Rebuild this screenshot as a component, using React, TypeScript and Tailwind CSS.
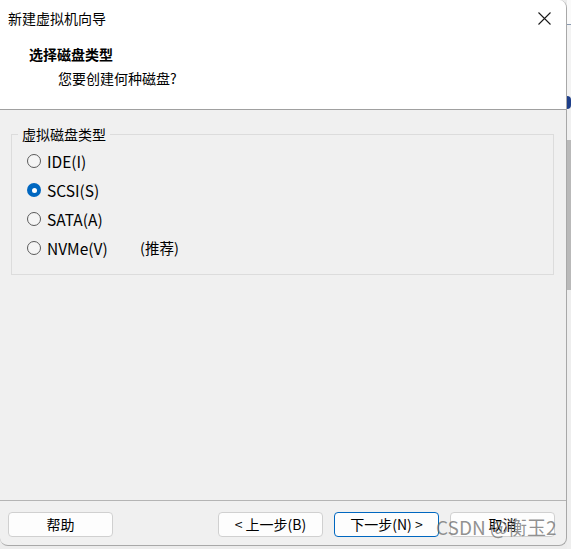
import React from 'react';

const options = [
  { label: 'IDE(I)', checked: false },
  { label: 'SCSI(S)', checked: true },
  { label: 'SATA(A)', checked: false },
  { label: 'NVMe(V)', checked: false, note: '(推荐)' },
];

const font = "font-['Noto_Sans_CJK_SC','Noto_Sans',sans-serif]";

const Radio: React.FC<{ checked: boolean }> = ({ checked }) =>
  checked ? (
    <span className="w-[14px] h-[14px] rounded-full bg-[#0067c0] flex items-center justify-center">
      <span className="w-[5px] h-[5px] rounded-full bg-white" />
    </span>
  ) : (
    <span className="w-[14px] h-[14px] rounded-full border border-[#5a5a5a] bg-[#f5f5f5]" />
  );

const Button: React.FC<{ children: React.ReactNode; primary?: boolean }> = ({ children, primary }) => (
  <button
    className={
      primary
        ? 'w-[105px] h-[25px] rounded-[4px] border border-[#0067c0] bg-[#fdfdfd] text-[14px] text-black flex items-center justify-center'
        : 'w-[105px] h-[25px] rounded-[4px] border border-[#d0d0d0] bg-[#fdfdfd] text-[14px] text-black flex items-center justify-center'
    }
  >
    {children}
  </button>
);

export default function App() {
  return (
    <div className={`w-[571px] h-[549px] flex bg-[#ececec] overflow-hidden ${font}`}>
      <div className="w-[567px] h-[546px] shrink-0 flex flex-col bg-[#f0f0f0] border-r border-b border-[#a8a8a8] rounded-tr-[8px] rounded-b-[8px] overflow-hidden relative">
        {/* header */}
        <div className="h-[110px] bg-white border-b border-[#a0a0a0] flex flex-col">
          <div className="h-[36px] flex items-center justify-between pl-[8px] pr-[14px]">
            <span className="text-[14px] leading-[20px] text-black">新建虚拟机向导</span>
            <svg width="13" height="13" viewBox="0 0 13 13" className="mr-[1px]">
              <path d="M0.5 0.5 L12.5 12.5 M12.5 0.5 L0.5 12.5" stroke="#1a1a1a" strokeWidth="1.1" fill="none" />
            </svg>
          </div>
          <div className="mt-[8px] pl-[29px] text-[14px] leading-[20px] font-bold text-black">选择磁盘类型</div>
          <div className="mt-[4px] pl-[58px] text-[14px] leading-[20px] text-black">您要创建何种磁盘?</div>
        </div>

        {/* body */}
        <div className="flex-1 pt-[24px] pl-[11px] pr-[12px]">
          <div className="relative h-[141px] border border-[#dcdcdc] pt-[16px] pl-[15px] flex flex-col gap-[9px]">
            <span className="absolute -top-[11px] left-[6px] px-[4px] bg-[#f0f0f0] text-[14px] leading-[20px] text-black">
              虚拟磁盘类型
            </span>
            {options.map((o) => (
              <div key={o.label} className="h-[20px] flex items-center">
                <Radio checked={o.checked} />
                <span className="ml-[6px] w-[93px] text-[15.5px] leading-[20px] text-black">{o.label}</span>
                {o.note && <span className="text-[14.5px] leading-[20px] text-black">{o.note}</span>}
              </div>
            ))}
          </div>
        </div>

        {/* footer */}
        <div className="h-[45px] border-t border-[#b4b4b4] flex items-start justify-between pt-[11px] pl-[8px] pr-[11px]">
          <Button>帮助</Button>
          <div className="flex gap-[11px]">
            <Button>&lt; 上一步(B)</Button>
            <Button primary>下一步(N) &gt;</Button>
            <Button>取消</Button>
          </div>
        </div>

        <span className="absolute left-[436px] top-[513px] text-[19px] leading-[28px] text-[rgba(110,110,110,0.75)] whitespace-nowrap">
          CSDN @衡玉2
        </span>
      </div>

      {/* background behind the dialog */}
      <div className="w-[4px] flex flex-col">
        <div className="h-[25px] bg-[#fafafa] border-b border-[#8a9ab0]" />
        <div className="h-[71px] bg-[#f3f3f3]" />
        <div className="h-[13px] bg-[#1e3f8a] rounded-r-full" />
        <div className="h-[31px] bg-[#f0f0f0]" />
        <div className="h-[150px] bg-[#b9b9b9]" />
        <div className="flex-1 bg-[#eeeeee]" />
      </div>
    </div>
  );
}
